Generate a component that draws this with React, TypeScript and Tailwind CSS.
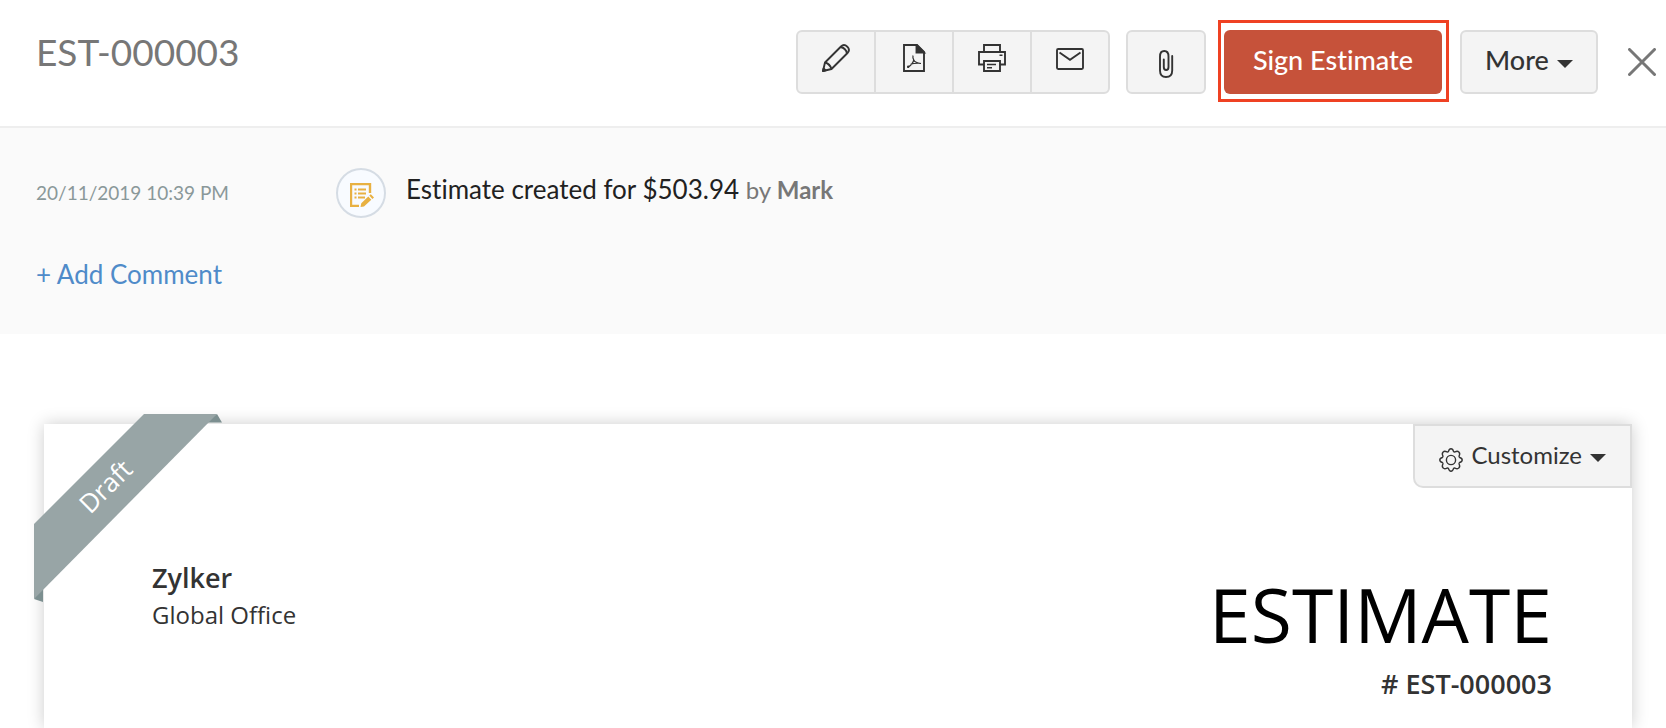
import type { ReactNode } from "react";

const iconProps = {
  width: 28,
  height: 28,
  viewBox: "0 0 28 28",
  fill: "none",
  stroke: "currentColor",
  strokeWidth: 1.9,
  "aria-hidden": true,
};

function PencilIcon() {
  return (
    <svg {...iconProps} strokeLinejoin="round">
      <path d="M1 27 L3 18.5 L19 2.5 Q22 -0.5 25.3 2.7 Q28.5 6 25.5 9 L9.5 25 Z" />
      <path d="M3 18.5 Q8 20 9.5 25 M18.5 3 Q24 4 25 9.5" />
      <path d="M1 27 L1.6 24.4 L3.6 26.4 Z" fill="currentColor" />
    </svg>
  );
}

function PdfIcon() {
  return (
    <svg {...iconProps}>
      <path d="M4 1 H17 L24 8 V27 H4 Z" />
      <path d="M16.5 1 V8.5 H24 Z" fill="currentColor" />
      <path
        d="M13 11.5 Q12.5 13.5 13.8 16 Q15 18.8 21 19.5 M13.8 16 Q12.5 20.5 7.5 23.5 M10.5 20.3 Q14 19 20.5 19.3"
        strokeWidth="1.2"
      />
      <circle cx="8.2" cy="22.8" r="1.2" fill="currentColor" stroke="none" />
    </svg>
  );
}

function PrinterIcon() {
  return (
    <svg {...iconProps}>
      <path d="M6 8 V1 H22 V8" />
      <path d="M6 20.5 H1 V8 H27 V20.5 H22" />
      <path d="M6 17 H22 V27 H6 Z" />
      <path d="M9 20.5 H18 M9 23.7 H14 M21.5 11.3 H24.5" strokeWidth="1.6" />
    </svg>
  );
}

function MailIcon() {
  return (
    <svg {...iconProps}>
      <rect x="1" y="5" width="26" height="20" rx="1.2" />
      <path d="M3.5 8.500 L14 15.800 L24.500 8.500" />
    </svg>
  );
}

function ClipIcon() {
  return (
    <svg {...iconProps} strokeLinecap="round">
      <path d="M20.2 6 V20.5 Q20.2 27 14 27 Q8 27 8 20.5 V6.5 Q8 1 12.3 1 Q16.5 1 16.5 6.5 V17 Q16.5 20 14.2 20 Q11.8 20 11.8 17 V9.5" />
    </svg>
  );
}

function NoteIcon() {
  return (
    <svg width="24" height="24" viewBox="0 0 24 24" fill="none" stroke="#e8b142" aria-hidden>
      <path d="M9 23 H1 V1 H20 V10" strokeWidth="2.4" />
      <path d="M4.5 6.5 H6.5 M4.5 10.5 H6.5 M4.5 14.5 H6.5 M8 6.5 H16 M8 10.5 H16 M8 14.5 H15" strokeWidth="2" />
      <path d="M10.5 24 L11.3 20.3 L18.3 13.5 L21.3 16.8 L14 23.5 Z M19.3 12.6 L20.8 11.2 L24 14.5 L22.4 16 Z" fill="#e8b142" stroke="none" />
    </svg>
  );
}

function GearIcon() {
  return (
    <svg width="24" height="24" viewBox="0 0 24 24" fill="none" stroke="currentColor" strokeWidth="1.4" strokeLinejoin="round" aria-hidden>
      <circle cx="12" cy="12" r="4.6" />
      <path d="M9.5 3.4 Q10.2 0.8 12 0.8 Q13.8 0.8 14.5 3.4 Q15 4.2 16 3.9 Q18.6 2.6 19.9 4.1 Q21.4 5.4 20.1 8 Q19.8 9 20.6 9.5 Q23.2 10.2 23.2 12 Q23.2 13.8 20.6 14.5 Q19.8 15 20.1 16 Q21.4 18.6 19.9 19.9 Q18.6 21.4 16 20.1 Q15 19.8 14.5 20.6 Q13.8 23.2 12 23.2 Q10.2 23.2 9.5 20.6 Q9 19.8 8 20.1 Q5.4 21.4 4.1 19.9 Q2.6 18.6 3.9 16 Q4.2 15 3.4 14.5 Q0.8 13.8 0.8 12 Q0.8 10.2 3.4 9.5 Q4.2 9 3.9 8 Q2.6 5.4 4.1 4.1 Q5.4 2.6 8 3.9 Q9 4.2 9.5 3.4 Z" />
    </svg>
  );
}

function Caret() {
  return (
    <svg width="16" height="8" viewBox="0 0 16 8" fill="currentColor" aria-hidden>
      <path d="M0 0 H16 L8 8 Z" />
    </svg>
  );
}

function ToolButton({ label, children }: { label: string; children: ReactNode }) {
  return (
    <button
      aria-label={label}
      className="flex h-full w-[78px] items-center justify-center border-l-2 border-[#dddddd] pb-2 first:w-[76px] first:border-l-0"
    >
      {children}
    </button>
  );
}

function Header() {
  return (
    <header className="flex items-start justify-between border-b-2 border-[#eeeeee] pt-5 pr-[10px] pb-6 pl-9">
      <h1 className="mt-[10px] text-[37px] leading-[44px] text-[#777777]">EST-000003</h1>
      <div className="flex items-start">
        <div className="mt-[10px] flex h-16 overflow-hidden rounded-md border-2 border-[#dddddd] bg-[#f4f4f4]">
          <ToolButton label="Edit">
            <PencilIcon />
          </ToolButton>
          <ToolButton label="Download PDF">
            <PdfIcon />
          </ToolButton>
          <ToolButton label="Print">
            <PrinterIcon />
          </ToolButton>
          <ToolButton label="Email">
            <MailIcon />
          </ToolButton>
        </div>
        <button
          aria-label="Attach file"
          className="mt-[10px] ml-4 flex h-16 w-20 items-center justify-center rounded-md border-2 border-[#dddddd] bg-[#f4f4f4] pt-1"
        >
          <ClipIcon />
        </button>
        <div className="ml-3 border-[3px] border-[#ef4123] pt-[7px] pr-1 pb-[5px] pl-[3px]">
          <button className="h-16 w-[218px] rounded-md bg-[#c6523a] pb-1 text-[27px] font-medium text-white">Sign Estimate</button>
        </div>
        <button className="mt-[10px] ml-[11px] flex h-16 w-[138px] items-center justify-center gap-2 rounded-md border-2 border-[#dddddd] bg-[#f4f4f4] pb-1 text-[27px] font-medium">
          More
          <span className="pt-2">
            <Caret />
          </span>
        </button>
        <button aria-label="Close" className="mt-7 ml-[30px] text-[#777777]">
          <svg width="28" height="28" viewBox="0 0 28 28" stroke="currentColor" strokeWidth="3" strokeLinecap="round" aria-hidden>
            <path d="M1.5 1.5 L26.5 26.5 M26.5 1.5 L1.5 26.5" />
          </svg>
        </button>
      </div>
    </header>
  );
}

function Activity() {
  return (
    <section className="bg-[#fafafa] px-9 py-10">
      <div className="flex items-center">
        <time className="w-[300px] text-[19px] text-[#8a9899]">20/11/2019 10:39 PM</time>
        <span className="flex size-[50px] items-center justify-center rounded-full border-2 border-[#d5dce4] bg-[#f8fbff] pt-1 pl-px">
          <NoteIcon />
        </span>
        <p className="pb-2 pl-5 text-[26px] text-[#212121]">
          Estimate created for $503.94 <span className="text-2xl text-[#777777]">by <b>Mark</b></span>
        </p>
      </div>
      <a href="#comment" className="mt-[38px] mb-0.5 inline-block text-[26px] leading-9 text-[#4f8bc9]">
        + Add Comment
      </a>
    </section>
  );
}

function Ribbon() {
  return (
    <div className="absolute -top-[10px] -left-[10px] size-[188px]">
      <svg width="188" height="188" viewBox="0 0 188 188" className="absolute inset-0" aria-hidden>
        <path d="M170 9 L183 0 L188 8.5 H170 Z M0 185 L9 170 V188 Z" fill="#7c8f90" />
        <path d="M110 0 H183 L0 185 V110 Z" fill="#98a5a6" />
      </svg>
      <span className="absolute top-[54px] left-[31px] w-20 -rotate-45 text-center text-[26px] leading-9 text-white">Draft</span>
    </div>
  );
}

function Document() {
  return (
    <article className="relative flex-1 bg-white font-['Open_Sans',sans-serif] shadow-[0_0_16px_rgba(0,0,0,0.2)]">
      <Ribbon />
      <div className="flex justify-end">
        <button className="flex h-16 items-center rounded-bl-[10px] border-2 border-[#dddddd] bg-[#f4f4f4] px-6 font-[Lato,sans-serif] text-2xl">
          <span className="mr-2 pt-2">
            <GearIcon />
          </span>
          <span className="mr-2 pb-0.5">Customize</span>
          <span className="pt-1">
            <Caret />
          </span>
        </button>
      </div>
      <div className="flex justify-between pr-20 pl-[108px]">
        <div className="pt-[72px]">
          <p className="text-[27px] leading-9 font-semibold">Zylker</p>
          <p className="text-2xl leading-[38px]">Global Office</p>
        </div>
        <div className="pt-[76px] text-right">
          <h2 className="text-[75px] leading-[100px] text-black">ESTIMATE</h2>
          <p className="pt-0.5 text-[27px] leading-9 font-semibold"># EST-000003</p>
        </div>
      </div>
    </article>
  );
}

export default function App() {
  return (
    <div className="flex min-h-screen flex-col overflow-hidden bg-white font-[Lato,sans-serif] text-[#333333] [font-variant-ligatures:none]">
      <Header />
      <Activity />
      <main className="flex flex-1 flex-col pt-[90px] pr-[34px] pl-11">
        <Document />
      </main>
    </div>
  );
}
